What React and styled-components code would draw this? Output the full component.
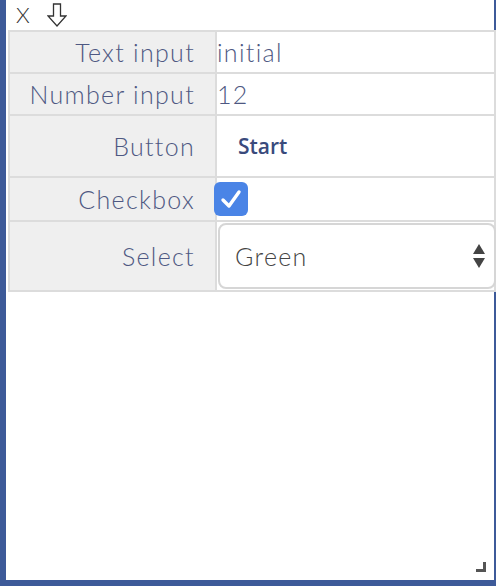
import styled, { createGlobalStyle } from 'styled-components';
import { Fragment } from 'react';

const Global = createGlobalStyle`
    html, body {
        margin: 0;
        padding: 0;
        background: #3d5a99;
        height: 586px;
        overflow: hidden;
    }
    body {
        font-family: Lato, "Liberation Sans", sans-serif;
    }
`

const Win = styled.div`
    position: relative;
    margin-left: 6px;
    width: 488px;
    height: 580px;
    background: #fff;
`

const TopBar = styled.div`
    display: flex;
    align-items: center;
    gap: 17px;
    height: 30px;
    padding-left: 10px;
`

const CloseBtn = styled.span`
    font-weight: 300;
    font-size: 22px;
    color: #333;
    line-height: 1;
`

const Table = styled.div`
    display: grid;
    grid-template-columns: 205px 277px;
    gap: 2px;
    background: #dcdcdc;
    margin-left: 2px;
    padding: 2px;
    box-sizing: border-box;
    width: 488px;
`

const Label = styled.div`
    background: #efefef;
    height: ${p => p.h}px;
    display: flex;
    align-items: center;
    justify-content: flex-end;
    padding-right: 20px;
    font-size: 25px;
    font-weight: 300;
    letter-spacing: 1.3px;
    color: #4e5882;
`

const Cell = styled.div`
    background: #fff;
    height: ${p => p.h}px;
    display: flex;
    align-items: center;
    font-size: 25px;
    font-weight: 300;
    letter-spacing: 1.3px;
    color: #4e5882;
`

const TextVal = styled.span`
    padding-left: 0;
`

const StartBtn = styled.span`
    padding-left: 21px;
    font-family: "Open Sans", sans-serif;
    font-size: 21px;
    font-weight: 600;
    letter-spacing: 0;
    color: #3a4a7c;
`

const Check = styled.div`
    width: 34px;
    height: 34px;
    margin-left: -3px;
    border-radius: 6px;
    background: #4a84e6;
    display: flex;
    align-items: center;
    justify-content: center;
`

const SelectBox = styled.div`
    flex: 1;
    height: 66px;
    margin: 0 -2px 0 1px;
    border: 2px solid #d6d6d6;
    border-radius: 8px;
    box-sizing: border-box;
    display: flex;
    align-items: center;
    justify-content: space-between;
    padding: 0 8px 0 15px;
    color: #444;
`

const Grip = styled.svg`
    position: absolute;
    right: 8px;
    bottom: 8px;
`

const rows = [
    { label: 'Text input', h: 40, kind: 'text', value: 'initial' },
    { label: 'Number input', h: 40, kind: 'text', value: '12' },
    { label: 'Button', h: 60, kind: 'button', value: 'Start' },
    { label: 'Checkbox', h: 42, kind: 'check' },
    { label: 'Select', h: 68, kind: 'select', value: 'Green' },
]

const renderValue = row => {
    if (row.kind === 'button') return <StartBtn>{row.value}</StartBtn>
    if (row.kind === 'check') return (
        <Check>
            <svg width="22" height="20" viewBox="0 0 22 20">
                <path d="M3 11 L9 17 L19 3" fill="none" stroke="#fff" strokeWidth="3.4" strokeLinecap="round" strokeLinejoin="round" />
            </svg>
        </Check>
    )
    if (row.kind === 'select') return (
        <SelectBox>
            <span>{row.value}</span>
            <svg width="14" height="26" viewBox="0 0 14 26">
                <path d="M7 1 L13 11 L1 11 Z" fill="#444" />
                <path d="M7 25 L13 15 L1 15 Z" fill="#444" />
            </svg>
        </SelectBox>
    )
    return <TextVal>{row.value}</TextVal>
}

const App = () => {
    return (
        <>
            <Global />
            <Win>
                <TopBar>
                    <CloseBtn>X</CloseBtn>
                    <svg width="20" height="24" viewBox="0 0 20 24">
                        <path d="M6.5 1 H13.5 V13 H19 L10 23 L1 13 H6.5 Z" fill="none" stroke="#333" strokeWidth="1.3" strokeLinejoin="miter" />
                    </svg>
                </TopBar>
                <Table>
                    {rows.map(row => (
                        <Fragment key={row.label}>
                            <Label h={row.h}>{row.label}</Label>
                            <Cell h={row.h}>{renderValue(row)}</Cell>
                        </Fragment>
                    ))}
                </Table>
                <Grip width="10" height="10" viewBox="0 0 10 10">
                    <path d="M7 0 H10 V10 H0 V7 H7 Z" fill="#555" />
                </Grip>
            </Win>
        </>
    )
}

export default App;
